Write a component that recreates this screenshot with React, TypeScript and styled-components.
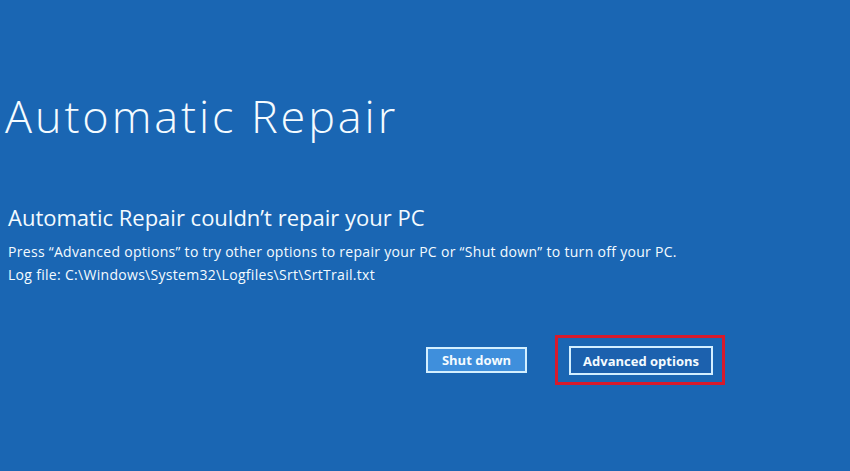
import React from 'react'
import styled, {createGlobalStyle} from 'styled-components'

const GlobalStyle = createGlobalStyle`
  html, body {
    margin: 0;
    padding: 0;
    background: #1a66b3;
  }
`

const Screen = styled.div`
  width: 850px;
  height: 471px;
  box-sizing: border-box;
  background: #1a66b3;
  color: #f4fbff;
  font-family: "Open Sans", "Noto Sans", sans-serif;
  display: flex;
  flex-direction: column;
  padding: 88px 0 0 8px;
  overflow: hidden;
`

const Title = styled.h1`
  margin: 0 0 0 -3px;
  font-size: 45px;
  font-weight: 300;
  line-height: 56px;
  letter-spacing: 2.9px;
`

const Subtitle = styled.h2`
  margin: 60px 0 0;
  font-size: 22px;
  font-weight: 400;
  line-height: 26px;
`

const Message = styled.p`
  margin: 10px 0 0;
  font-size: 14px;
  line-height: 23px;
  letter-spacing: 0.3px;
`

const Actions = styled.div`
  display: flex;
  align-items: center;
  justify-content: flex-end;
  gap: 28px;
  margin-top: 49px;
  padding-right: 125px;
`

const Button = styled.button<{ primary?: boolean }>`
  box-sizing: border-box;
  height: ${({primary}) => primary ? 29 : 26}px;
  padding: 0 12px;
  border: 2px solid #d3efff;
  background: ${({primary}) => primary ? '#1c61ae' : '#3f8fdc'};
  color: #f4fbff;
  font-family: "Open Sans", "Noto Sans", sans-serif;
  font-size: 13px;
  font-weight: 700;
  cursor: pointer;
`

const Highlight = styled.div`
  display: flex;
  padding: 8px 9px 7px 11px;
  border: 3px solid #d71a2c;
`

export default function App() {
  return (
    <>
      <GlobalStyle/>
      <Screen>
        <Title>Automatic Repair</Title>
        <Subtitle>Automatic Repair couldn’t repair your PC</Subtitle>
        <Message>
          Press “Advanced options” to try other options to repair your PC or “Shut down” to turn off your PC.
          <br/>
          Log file: C:\Windows\System32\Logfiles\Srt\SrtTrail.txt
        </Message>
        <Actions>
          <Button style={{width: 101}}>Shut down</Button>
          <Highlight>
            <Button primary style={{width: 144}}>Advanced options</Button>
          </Highlight>
        </Actions>
      </Screen>
    </>
  )
}
